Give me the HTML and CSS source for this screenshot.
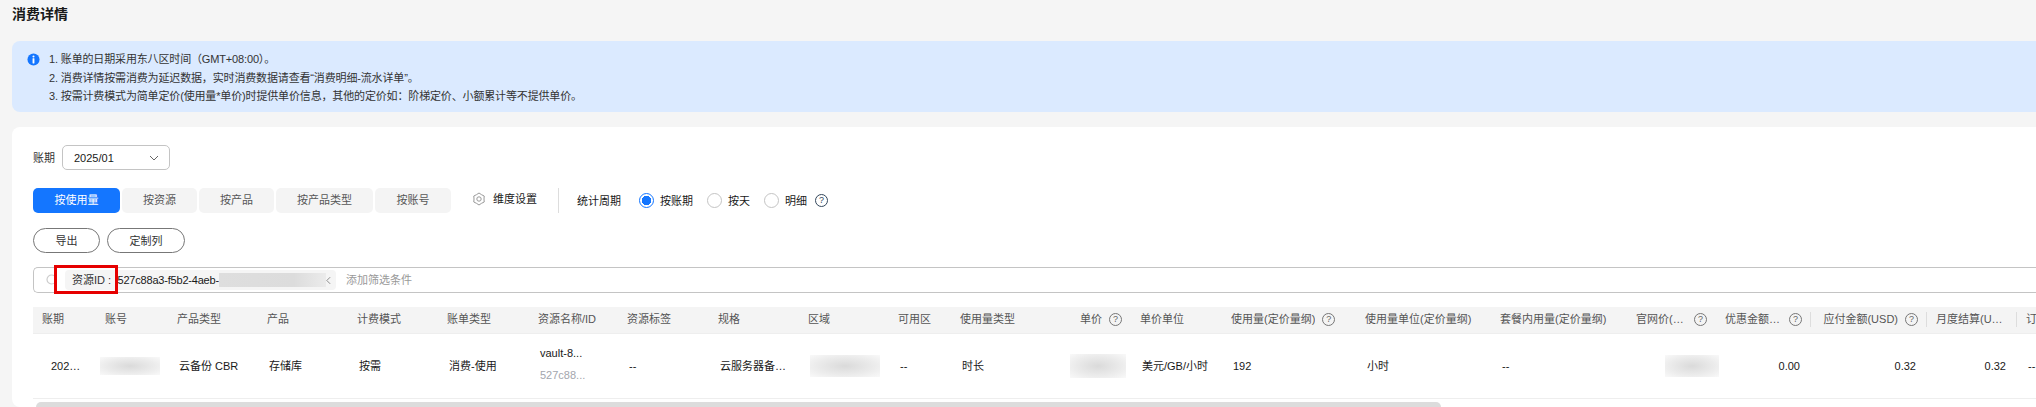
FILE: index.html
```html
<!DOCTYPE html>
<html lang="zh-CN">
<head>
<meta charset="utf-8">
<title>消费详情</title>
<link rel="stylesheet" href="styles.css">
</head>
<body>
<div class="page">
  <h1 class="title">消费详情</h1>
  <div class="notice">
    <svg class="notice-icon" viewBox="0 0 14 14"><circle cx="7" cy="7" r="6.5" fill="#1476ff"/><circle cx="7" cy="3.7" r="1.1" fill="#fff"/><rect x="6" y="5.6" width="2" height="5.6" rx=".4" fill="#fff"/></svg>
    <div class="notice-text">
      <div>1. 账单的日期采用东八区时间（GMT+08:00）。</div>
      <div>2. 消费详情按需消费为延迟数据，实时消费数据请查看“消费明细-流水详单”。</div>
      <div>3. 按需计费模式为简单定价(使用量*单价)时提供单价信息，其他的定价如：阶梯定价、小额累计等不提供单价。</div>
    </div>
  </div>
  <section class="card">
    <div class="period-row">
      <span class="period-label">账期</span>
      <div class="select">
        <span>2025/01</span>
        <svg class="chevron" viewBox="0 0 10 6"><path d="M1 1l4 4 4-4" fill="none" stroke="#666" stroke-width="1"/></svg>
      </div>
    </div>
    <div class="tab-row">
      <div class="tabs">
        <span class="tab tab-active tab-w87">按使用量</span>
        <span class="tab tab-w75">按资源</span>
        <span class="tab tab-w75">按产品</span>
        <span class="tab tab-w97">按产品类型</span>
        <span class="tab tab-w76">按账号</span>
      </div>
      <div class="dimension">
        <svg class="gear" viewBox="0 0 14 14"><path d="M7 1L9.500 2.670 12.200 4 12 7 12.200 10 9.500 11.330 7 13 4.500 11.330 1.800 10 2 7 1.800 4 4.500 2.670z" fill="none" stroke="#999" stroke-width="1" stroke-linejoin="round"/><circle cx="7" cy="7" r="2.200" fill="none" stroke="#999" stroke-width="1"/></svg>
        <span>维度设置</span>
      </div>
      <span class="divider"></span>
      <span class="stat-label">统计周期</span>
      <span class="radio radio-on"></span><span class="radio-text">按账期</span>
      <span class="radio"></span><span class="radio-text">按天</span>
      <span class="radio"></span><span class="radio-text">明细</span>
      <span class="help help-dark">?</span>
    </div>
    <div class="actions">
      <button class="btn btn-export">导出</button>
      <button class="btn btn-columns">定制列</button>
    </div>
    <div class="filter">
      <svg class="search" viewBox="0 0 12 12"><circle cx="5.500" cy="5.500" r="4.500" fill="none" stroke="#ccc" stroke-width="1.200"/></svg>
      <div class="chip">
        <span class="chip-key">资源ID :</span>
        <span class="chip-value">527c88a3-f5b2-4aeb-</span>
        <span class="blur blur-id"></span>
        <svg class="chip-x" viewBox="0 0 6 10"><path d="M5 1L1 5l4 4" fill="none" stroke="#777" stroke-width="1"/></svg>
      </div>
      <span class="placeholder">添加筛选条件</span>
      <span class="annotation"></span>
    </div>
    <table class="bill">
      <colgroup>
        <col class="c63"><col class="c72"><col class="c90"><col class="c90"><col class="c90"><col class="c91"><col class="c89"><col class="c91"><col class="c90"><col class="c90"><col class="c62"><col class="c90"><col class="c90"><col class="c91"><col class="c134"><col class="c135"><col class="c136"><col class="c89"><col class="c95"><col class="c116"><col class="c90"><col class="c100">
      </colgroup>
      <thead>
        <tr>
          <th>账期</th><th>账号</th><th>产品类型</th><th>产品</th><th>计费模式</th><th>账单类型</th><th>资源名称/ID</th><th>资源标签</th><th>规格</th><th>区域</th><th>可用区</th><th>使用量类型</th>
          <th><div class="th-in th-end"><span class="th-name">单价</span><span class="help">?</span></div></th>
          <th>单价单位</th>
          <th><div class="th-in"><span class="th-name">使用量(定价量纲)</span><span class="help">?</span></div></th>
          <th>使用量单位(定价量纲)</th>
          <th>套餐内用量(定价量纲)</th>
          <th><div class="th-in"><span class="th-name">官网价(USD)</span><span class="help">?</span></div></th>
          <th class="sep"><div class="th-in th-end"><span class="th-name">优惠金额(USD)</span><span class="help">?</span></div></th>
          <th class="sep"><div class="th-in th-end"><span class="th-name">应付金额(USD)</span><span class="help">?</span></div></th>
          <th class="sep"><div class="th-in"><span class="th-name">月度结算(USD)</span></div></th>
          <th>订单号</th>
        </tr>
      </thead>
      <tbody>
        <tr>
          <td class="td-period">2025/01</td>
          <td class="td-account"><span class="blur blur-account"></span></td>
          <td>云备份 CBR</td><td>存储库</td><td>按需</td><td>消费-使用</td>
          <td><div class="res-name">vault-8...</div><div class="res-id">527c88...</div></td>
          <td>--</td><td>云服务器备份存储库</td>
          <td class="td-region"><span class="blur blur-region"></span></td>
          <td>--</td><td>时长</td>
          <td class="td-price"><span class="blur blur-price"></span></td>
          <td>美元/GB/小时</td><td>192</td><td>小时</td><td>--</td>
          <td class="td-list"><span class="blur blur-list"></span></td>
          <td class="num">0.00</td><td class="num">0.32</td><td class="num">0.32</td><td>--</td>
        </tr>
      </tbody>
    </table>
    <div class="scrollbar"></div>
  </section>
</div>
</body>
</html>
```
FILE: styles.css
```css
* { box-sizing: border-box; }
html, body { margin: 0; height: 407px; overflow: hidden; }
body {
  background: #f5f5f5;
  color: #191919;
  font: 11px/18px "Liberation Sans", "Noto Sans CJK SC", sans-serif;
}
.page { width: 2140px; padding-left: 12px; }
.title { margin: 0; height: 41px; font-size: 14px; line-height: 28px; font-weight: 700; }
.notice {
  display: flex;
  height: 71px;
  padding: 9px 0 0 15px;
  background: #dbeaff;
  border-radius: 8px;
}
.notice-icon { width: 13px; height: 13px; margin: 3px 9px 0 0; flex: none; }
.notice-text { line-height: 18.500px; color: #333; letter-spacing: -.15px; }
.card {
  margin-top: 15px;
  height: 280px;
  padding: 18px 0 0 21px;
  background: #fff;
  border-radius: 8px;
}
.period-row { display: flex; align-items: center; height: 25px; }
.period-label { width: 29px; color: #333; }
.select {
  display: flex;
  align-items: center;
  justify-content: space-between;
  width: 108px;
  height: 25px;
  padding: 0 10px 0 11px;
  border: 1px solid #c4c4c4;
  border-radius: 5px;
}
.chevron { width: 10px; height: 6px; }
.tab-row { display: flex; align-items: center; height: 25px; margin-top: 18px; }
.tabs { display: flex; gap: 2px; }
.tab {
  height: 25px;
  line-height: 25px;
  text-align: center;
  background: #f4f4f4;
  border-radius: 5px;
  color: #575757;
}
.tab-active { background: #1476ff; color: #fff; }
.tab-w87 { width: 87px; }
.tab-w75 { width: 75px; }
.tab-w97 { width: 97px; }
.tab-w76 { width: 76px; }
.dimension { display: flex; align-items: center; gap: 7px; margin: -4px 0 0 21px; }
.gear { width: 14px; height: 14px; }
.divider { width: 1px; height: 25px; margin: 0 18px 0 21px; background: #ddd; }
.stat-label { margin-right: 18px; }
.radio {
  width: 15px;
  height: 15px;
  flex: none;
  border: 1px solid #c4c4c4;
  border-radius: 50%;
}
.radio-on { border-color: #1476ff; background: radial-gradient(circle, #1476ff 0 4.500px, #fff 5px); }
.radio-text { margin: 0 14px 0 6px; }
.help {
  display: inline-block;
  flex: none;
  width: 13px;
  height: 13px;
  margin-left: 7px;
  border: 1px solid #777;
  border-radius: 50%;
  font-size: 9px;
  line-height: 11px;
  font-weight: 400;
  text-align: center;
  color: #666;
}
.help-dark { margin-left: -6px; border-color: #33475b; color: #33475b; }
.actions { display: flex; gap: 7px; margin-top: 15px; }
.btn {
  height: 25px;
  padding: 0;
  background: #fff;
  border: 1px solid #777;
  border-radius: 13px;
  color: #333;
  font: inherit;
}
.btn-export { width: 67px; }
.btn-columns { width: 78px; }
.filter {
  position: relative;
  display: flex;
  align-items: center;
  height: 26px;
  margin-top: 14px;
  padding-left: 12px;
  border: 1px solid #c4c4c4;
  border-right: 0;
  border-radius: 5px 0 0 5px;
}
.search { width: 12px; height: 12px; margin-right: 7px; }
.chip {
  display: flex;
  align-items: center;
  width: 271px;
  height: 20px;
  padding-left: 7px;
  background: #f5f5f5;
  border-radius: 4px;
}
.chip-key { width: 45.500px; color: #333; }
.chip-value { width: 101.500px; flex: none; white-space: nowrap; letter-spacing: -.2px; }
.blur { display: inline-block; background: radial-gradient(ellipse at center, #dadada 0%, #ececec 60%, #f9f9f9 100%); }
.blur-id { width: 107px; height: 14px; background: linear-gradient(90deg, #dedede, #dcdcdc 70%, #ebebeb); }
.chip-x { width: 5px; height: 9px; }
.placeholder { margin-left: 10px; color: #999; }
.annotation {
  position: absolute;
  left: 20px;
  top: -3px;
  width: 64px;
  height: 29px;
  border: 3px solid #e60000;
}
.bill {
  width: 2084px;
  margin-top: 14px;
  table-layout: fixed;
  border-collapse: collapse;
}
.c62 { width: 62px; } .c63 { width: 63px; } .c72 { width: 72px; }
.c89 { width: 89px; } .c90 { width: 90px; } .c91 { width: 91px; }
.c95 { width: 95px; } .c100 { width: 100px; } .c116 { width: 116px; }
.c134 { width: 134px; } .c135 { width: 135px; } .c136 { width: 136px; }
th {
  position: relative;
  height: 26px;
  padding: 0 9px 1px;
  background: #f4f4f4;
  border-bottom: 1px solid #eee;
  text-align: left;
  font-weight: 400;
  color: #555;
  white-space: nowrap;
  overflow: hidden;
}
.sep::after {
  content: "";
  position: absolute;
  right: 0;
  top: 5px;
  width: 1px;
  height: 15px;
  background: #ddd;
}
.th-in { display: flex; align-items: center; min-width: 0; }
.th-end { justify-content: flex-end; }
.th-name { min-width: 0; overflow: hidden; text-overflow: ellipsis; }
td {
  height: 65px;
  padding: 0 11px;
  border-bottom: 1px solid #eee;
  white-space: nowrap;
  overflow: hidden;
  text-overflow: ellipsis;
}
.num { text-align: right; }
.td-period { padding: 0 15px 0 18px; }
.td-account { padding: 0 0 0 4px; }
.td-region { padding: 0 0 0 11px; }
.td-price { padding: 0 5px 0 0; text-align: right; }
.td-list { padding: 0; overflow: visible; text-align: right; }
.blur-account { width: 60px; height: 18px; vertical-align: middle; }
.blur-region { width: 70px; height: 22px; vertical-align: middle; }
.blur-price { width: 56px; height: 24px; vertical-align: middle; }
.blur-list { width: 54px; height: 22px; margin-right: -3px; vertical-align: middle; }
.res-name { line-height: 22px; margin-top: -3px; }
.res-id { line-height: 22px; color: #a3a6ad; }
.scrollbar {
  width: 1405px;
  height: 12px;
  margin: 3px 0 0 3px;
  background: #dcdcdc;
  border-radius: 5px;
}
```
